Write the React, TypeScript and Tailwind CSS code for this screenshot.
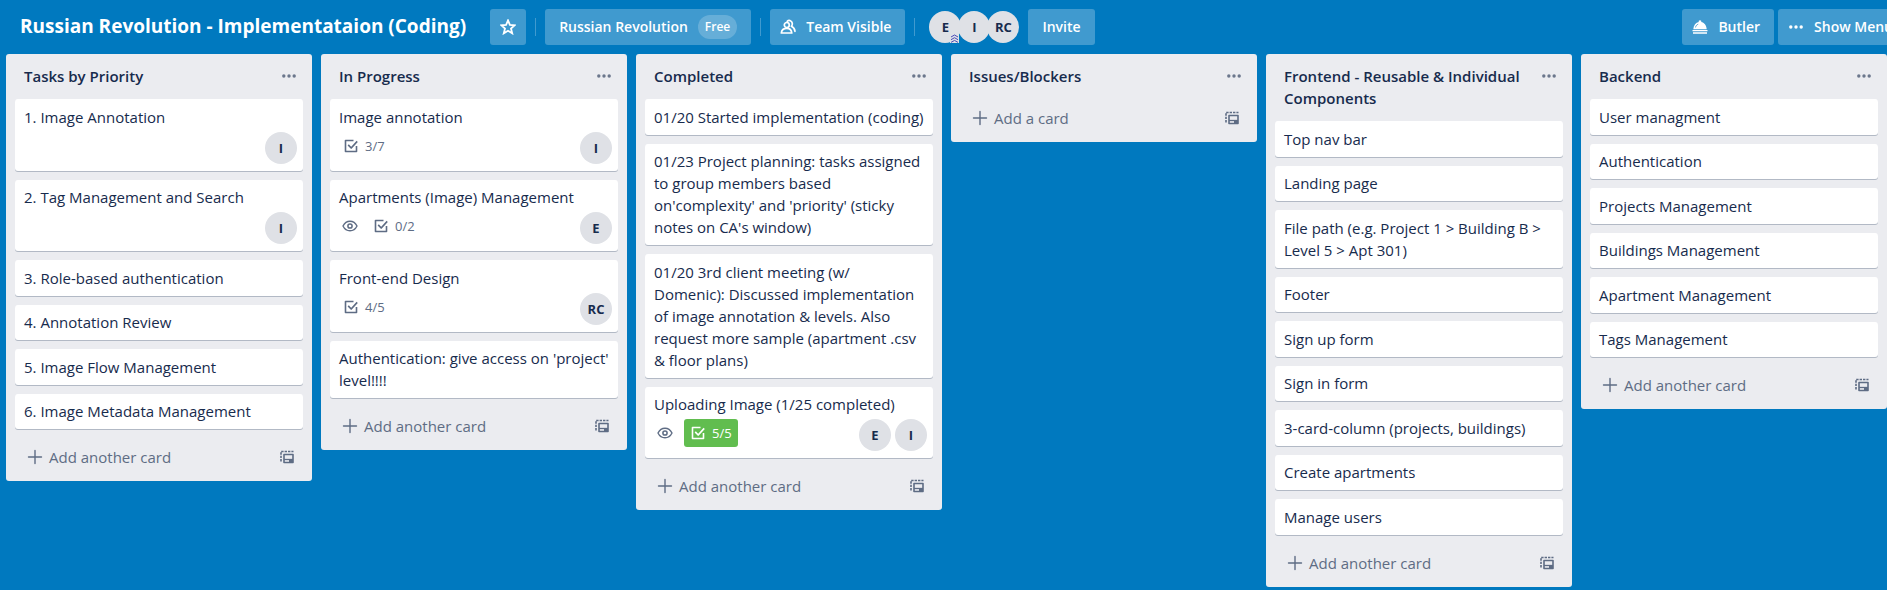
import type { ReactNode } from "react";

type CardData = {
  title: string;
  watched?: boolean;
  checklist?: string;
  done?: boolean;
  members?: string[];
};

type ListData = { title: string; cards: CardData[] };

const plain = (...titles: string[]): CardData[] => titles.map((title) => ({ title }));

const lists: ListData[] = [
  {
    title: "Tasks by Priority",
    cards: [
      { title: "1. Image Annotation", members: ["I"] },
      { title: "2. Tag Management and Search", members: ["I"] },
      ...plain(
        "3. Role-based authentication",
        "4. Annotation Review",
        "5. Image Flow Management",
        "6. Image Metadata Management",
      ),
    ],
  },
  {
    title: "In Progress",
    cards: [
      { title: "Image annotation", checklist: "3/7", members: ["I"] },
      { title: "Apartments (Image) Management", watched: true, checklist: "0/2", members: ["E"] },
      { title: "Front-end Design", checklist: "4/5", members: ["RC"] },
      { title: "Authentication: give access on 'project' level!!!!" },
    ],
  },
  {
    title: "Completed",
    cards: [
      ...plain(
        "01/20 Started implementation (coding)",
        "01/23 Project planning: tasks assigned to group members based on'complexity' and 'priority' (sticky notes on CA's window)",
        "01/20 3rd client meeting (w/ Domenic): Discussed implementation of image annotation & levels. Also request more sample (apartment .csv & floor plans)",
      ),
      {
        title: "Uploading Image (1/25 completed)",
        watched: true,
        checklist: "5/5",
        done: true,
        members: ["E", "I"],
      },
    ],
  },
  { title: "Issues/Blockers", cards: [] },
  {
    title: "Frontend - Reusable & Individual Components",
    cards: plain(
      "Top nav bar",
      "Landing page",
      "File path (e.g. Project 1 > Building B > Level 5 > Apt 301)",
      "Footer",
      "Sign up form",
      "Sign in form",
      "3-card-column (projects, buildings)",
      "Create apartments",
      "Manage users",
    ),
  },
  {
    title: "Backend",
    cards: plain(
      "User managment",
      "Authentication",
      "Projects Management",
      "Buildings Management",
      "Apartment Management",
      "Tags Management",
    ),
  },
];

function Icon({ className, children }: { className: string; children: ReactNode }) {
  return (
    <svg
      aria-hidden="true"
      viewBox="0 0 16 16"
      fill="none"
      stroke="currentColor"
      strokeLinecap="round"
      strokeLinejoin="round"
      className={className}
    >
      {children}
    </svg>
  );
}

function DotsIcon() {
  return (
    <svg aria-hidden="true" viewBox="0 0 16 4" fill="currentColor" className="h-1 w-4 shrink-0">
      <circle cx="2.8" cy="2" r="1.7" />
      <circle cx="8" cy="2" r="1.7" />
      <circle cx="13.2" cy="2" r="1.7" />
    </svg>
  );
}

function StarIcon() {
  return (
    <Icon className="size-4">
      <path
        strokeWidth="1.8"
        strokeLinejoin="miter"
        d="M8 1.4l1.9 4.5 4.8.4-3.7 3.2 1.2 4.8L8 11.7l-4.2 2.6L5 9.5 1.3 6.3l4.8-.4z"
      />
    </Icon>
  );
}

function TeamIcon() {
  return (
    <Icon className="size-4">
      <g strokeWidth="1.7">
        <circle cx="6.800" cy="6" r="2.500" />
        <path d="M1.300 14c.3-2.900 2.500-4.600 5.500-4.600s4.700 1.700 5 4.600z" />
        <path d="M7.200 2.300c1-.9 2.500-1 3.700-.2 1.700 1.200 1.900 3.600.5 5.200 2.100 1 3.300 2.600 3.600 5" />
      </g>
    </Icon>
  );
}

function ButlerIcon() {
  return (
    <svg aria-hidden="true" viewBox="0 0 16 16" fill="currentColor" className="size-4">
      <path d="M8 1.200a1.300 1.300 0 0 1 1.200 1.900c3 .6 5.200 3.200 5.500 7.100H1.300C1.600 6.300 3.800 3.700 6.800 3.100A1.300 1.300 0 0 1 8 1.200z" />
      <path d="M.5 11h15v1.300H.5zM1 13.200h14v1.500H1z" />
      <path d="M3.500 8.400c.4-1.700 1.300-2.700 2.700-3.200" stroke="#3f97cf" strokeWidth=".9" fill="none" />
    </svg>
  );
}

function EyeIcon() {
  return (
    <Icon className="size-4">
      <path strokeWidth="1.400" d="M1 8c1.600-3.200 4-4.800 7-4.800S13.400 4.800 15 8c-1.600 3.200-4 4.800-7 4.800S2.600 11.200 1 8z" />
      <circle cx="8" cy="8" r="2.100" strokeWidth="1.500" />
    </Icon>
  );
}

function ChecklistIcon() {
  return (
    <Icon className="size-4">
      <path strokeWidth="1.600" strokeLinecap="butt" d="M10.500 2.500H2.500v11h11V8" />
      <path strokeWidth="1.700" strokeLinecap="butt" d="M5.200 6.800l3 3.200 6-6.600" />
    </Icon>
  );
}

function PlusIcon() {
  return (
    <Icon className="size-4">
      <path strokeWidth="1.400" d="M8 1.500v13M1.500 8h13" />
    </Icon>
  );
}

function TemplateIcon() {
  return (
    <Icon className="size-4">
      <path strokeWidth="1.600" strokeLinecap="butt" d="M5 5.500h9v8H5z" />
      <path strokeWidth="1.300" strokeLinecap="butt" d="M5 10.500h9" />
      <path strokeWidth="2" strokeLinecap="butt" d="M10 12H14" />
      <path strokeWidth="1.600" strokeLinecap="butt" strokeDasharray="2.400 1" d="M2 12.500V2.500h12.500" />
    </Icon>
  );
}

function Avatar({ initials }: { initials: string }) {
  return (
    <span className="flex size-8 shrink-0 items-center justify-center rounded-full bg-[#dfe1e6] text-[13px] font-bold text-[#172b4d]">
      {initials}
    </span>
  );
}

function Card({ card }: { card: CardData }) {
  const hasFooter = Boolean(card.checklist || card.members);
  return (
    <li className="mt-[9px] rounded-[3px] bg-white px-[9px] pt-[7px] pb-[7px] shadow-[0_1px_0_rgba(9,30,66,0.25)] even:pt-[6px]">
      <p>{card.title}</p>
      {hasFooter && (
        <div className="flex h-9 items-start pt-1 text-[13px] text-[#5e6c84]">
          {card.watched && (
            <span className="mr-2 flex h-7 items-center px-[3px]">
              <EyeIcon />
            </span>
          )}
          {card.checklist && (
            <span
              className={
                card.done
                  ? "flex h-7 items-center gap-[6px] rounded-[3px] bg-[#61bd4f] px-[6px] text-white"
                  : "flex h-7 items-center gap-[6px] px-[4px]"
              }
            >
              <ChecklistIcon />
              {card.checklist}
            </span>
          )}
          <span className="-mr-[3px] ml-auto flex gap-1">
            {card.members?.map((m) => <Avatar key={m} initials={m} />)}
          </span>
        </div>
      )}
    </li>
  );
}

function List({ list }: { list: ListData }) {
  return (
    <section className="w-[306px] shrink-0 rounded-[3px] bg-[#ebecf0] px-[9px] text-[15px] leading-[22px] text-[#172b4d]">
      <header className="flex items-start pt-[11px] pb-[3px] pl-[9px]">
        <h2 className="min-w-0 flex-1 font-semibold">{list.title}</h2>
        <button
          type="button"
          aria-label="List actions"
          className="flex h-[22px] w-7 items-center justify-center text-[#6b778c]"
        >
          <DotsIcon />
        </button>
      </header>
      <ul>
        {list.cards.map((card) => (
          <Card key={card.title} card={card} />
        ))}
      </ul>
      <footer className="flex h-[52px] items-center justify-between pt-1 pr-[8px] pl-3 text-[#5e6c84]">
        <button type="button" className="flex items-center gap-[6px]">
          <PlusIcon />
          {list.cards.length ? "Add another card" : "Add a card"}
        </button>
        <button type="button" aria-label="Create from template">
          <TemplateIcon />
        </button>
      </footer>
    </section>
  );
}

function BarButton({ label, className = "px-3", children }: { label?: string; className?: string; children: ReactNode }) {
  return (
    <button
      type="button"
      aria-label={label}
      className={`flex h-9 shrink-0 items-center rounded-[3px] bg-white/25 ${className}`}
    >
      {children}
    </button>
  );
}

function Divider() {
  return <span className="mx-[9px] h-[18px] w-px shrink-0 bg-white/25" />;
}

export default function App() {
  return (
    <div className="min-h-screen overflow-hidden bg-[#0079bf] font-['Open_Sans','Noto_Sans',sans-serif]">
      <header className="flex h-[54px] items-center pl-5 text-sm font-semibold whitespace-nowrap text-white">
        <h1 className="mr-6 text-[19px] font-bold">Russian Revolution - Implementataion (Coding)</h1>
        <BarButton label="Star board" className="w-9 justify-center">
          <StarIcon />
        </BarButton>
        <Divider />
        <BarButton className="gap-[10px] px-[14px]">
          Russian Revolution
          <span className="rounded-full bg-white/20 px-[7px] text-xs leading-[24px]">Free</span>
        </BarButton>
        <Divider />
        <BarButton className="gap-[10px] pr-[14px] pl-[10px]">
          <TeamIcon />
          Team Visible
        </BarButton>
        <Divider />
        <div className="ml-[5px] flex -space-x-[3px]">
          <span className="relative">
            <Avatar initials="E" />
            <svg
              aria-hidden="true"
              viewBox="0 0 9 9"
              fill="none"
              stroke="#4a4ab8"
              strokeWidth="1"
              className="absolute right-[2px] bottom-0 z-10 size-[9px] bg-[#dfe1e6]"
            >
              <path d="M1 3L4.500 1 8 3M1 5.700l3.500-2 3.500 2M1 8.400l3.500-2 3.500 2" />
            </svg>
          </span>
          <Avatar initials="I" />
          <Avatar initials="RC" />
        </div>
        <span className="ml-[9px] flex">
          <BarButton className="px-[14px]">Invite</BarButton>
        </span>
        <div className="-mr-4 ml-auto flex gap-1">
          <BarButton className="gap-[10px] pr-[14px] pl-[10px]">
            <ButlerIcon />
            Butler
          </BarButton>
          <BarButton className="gap-[10px] px-[10px]">
            <DotsIcon />
            Show Menu
          </BarButton>
        </div>
      </header>
      <main className="flex items-start gap-[9px] pl-[6px]">
        {lists.map((list) => (
          <List key={list.title} list={list} />
        ))}
      </main>
    </div>
  );
}
